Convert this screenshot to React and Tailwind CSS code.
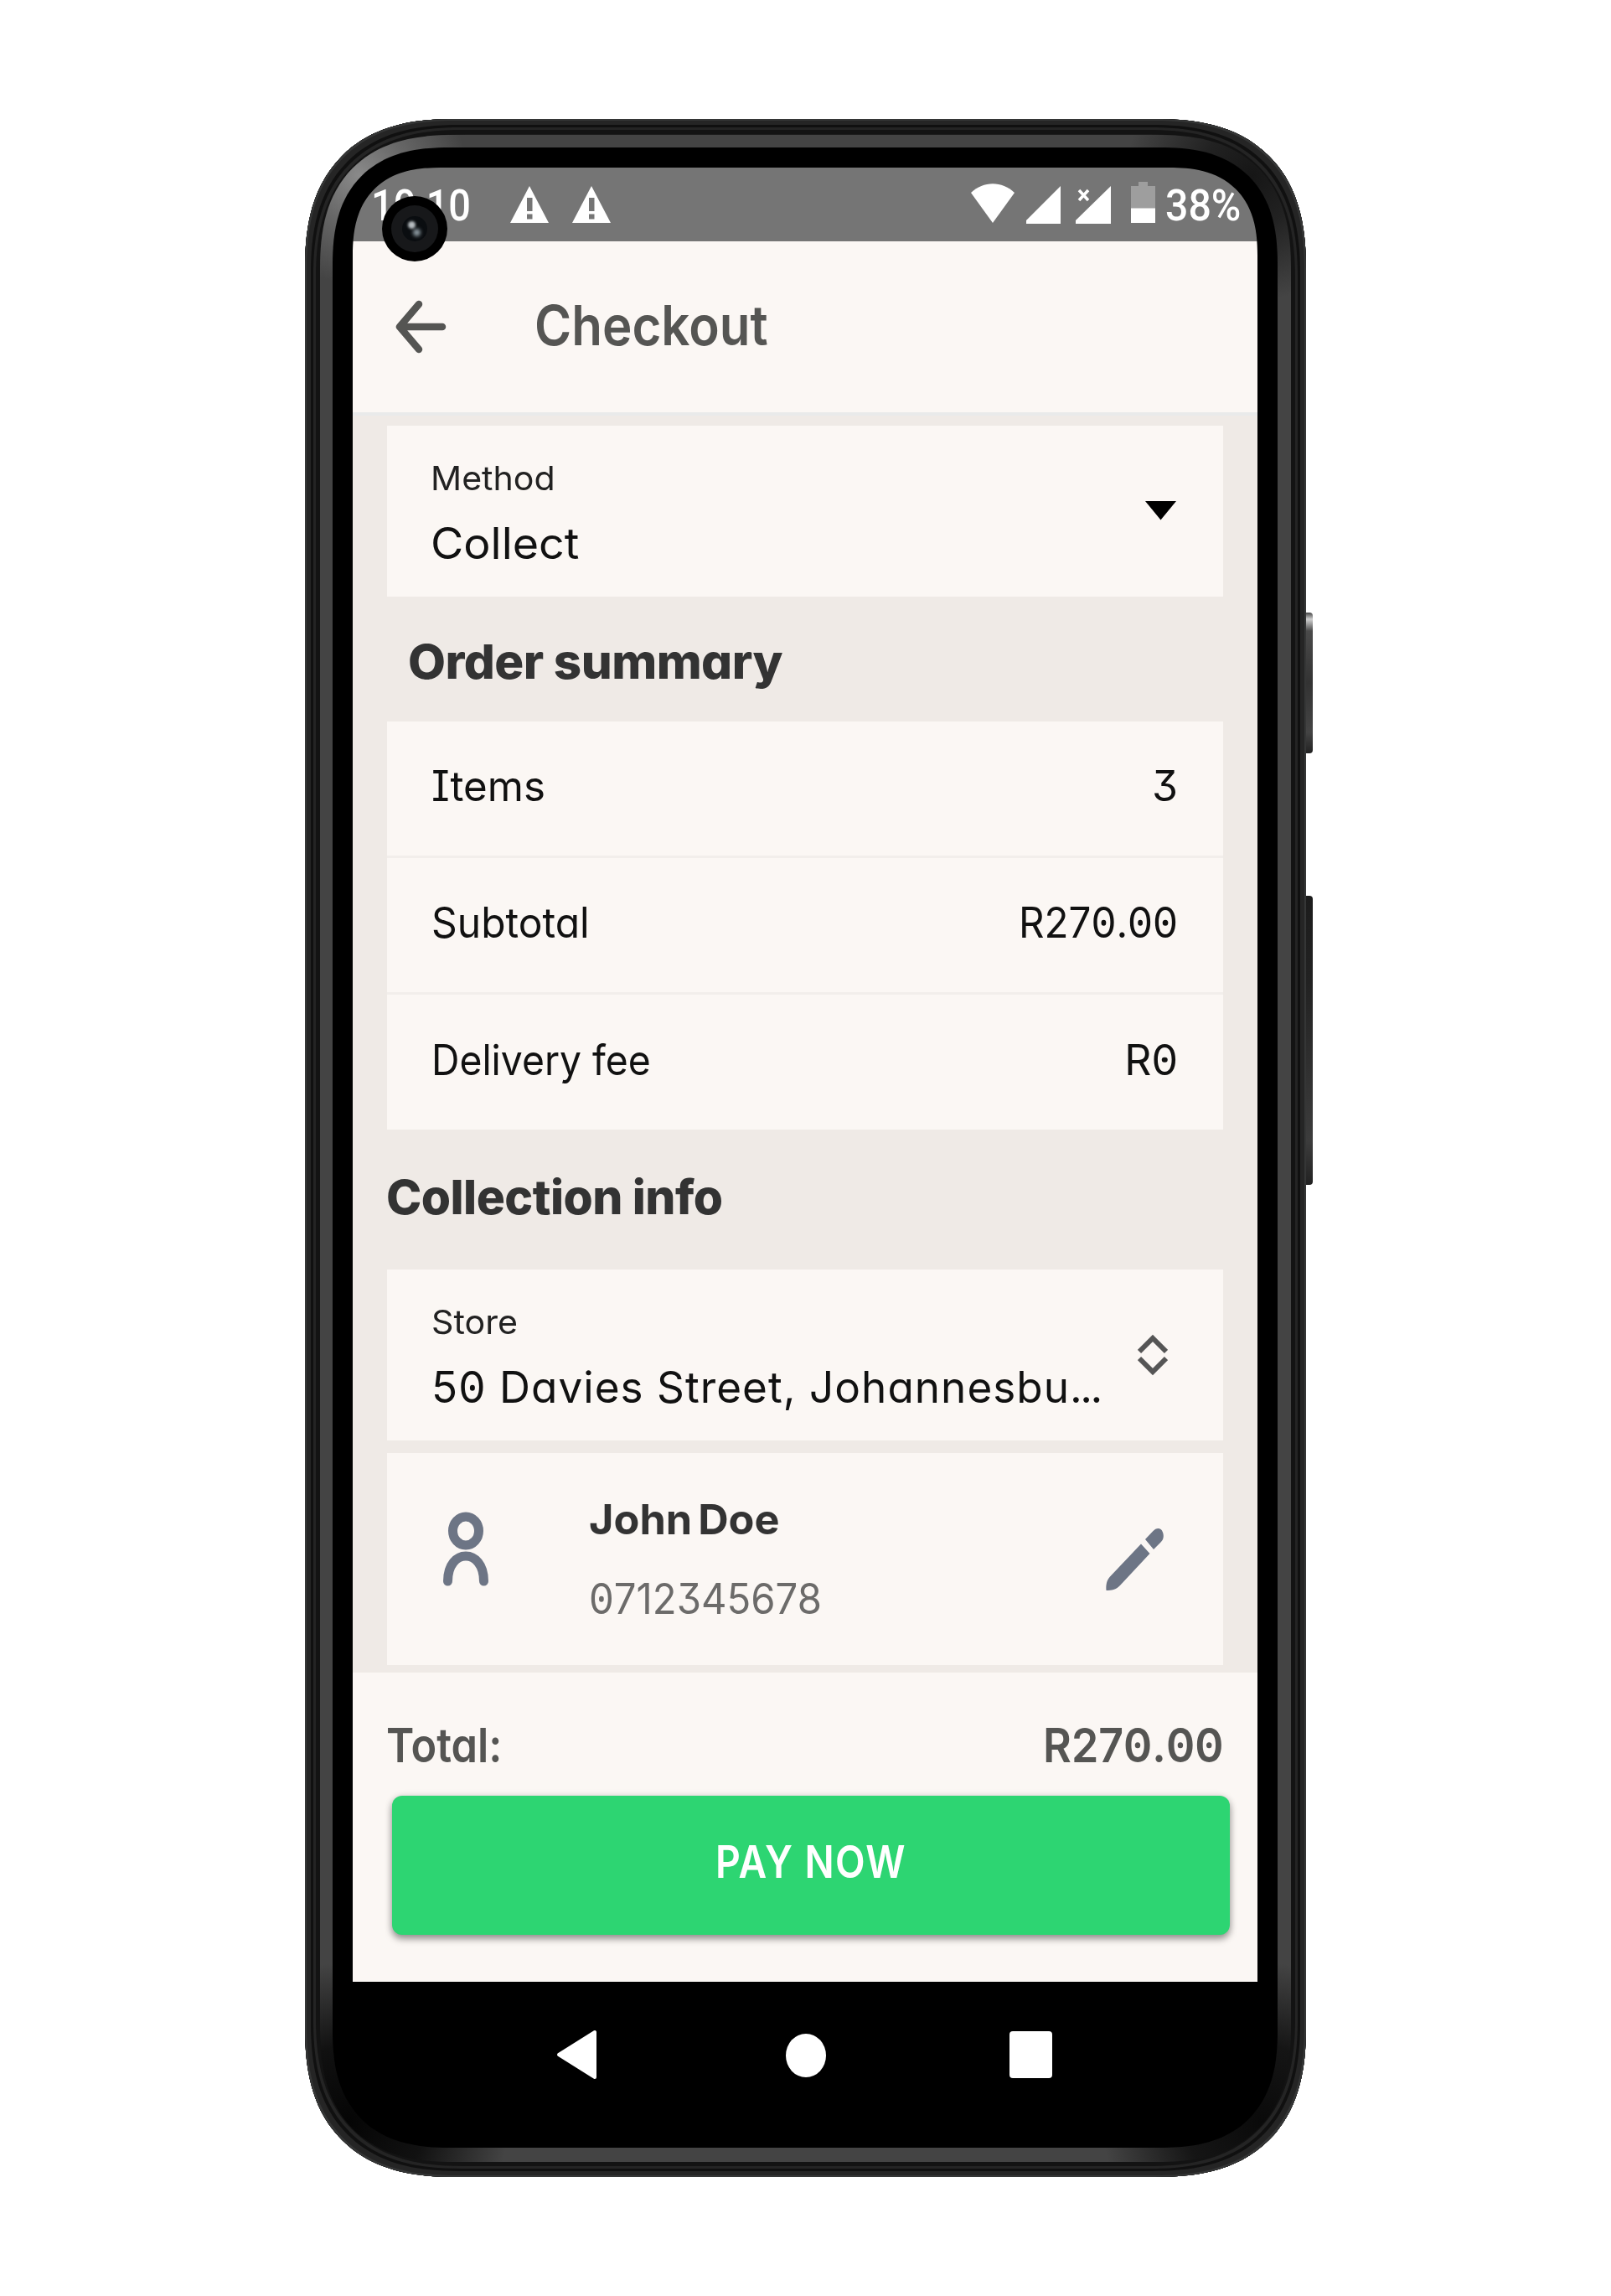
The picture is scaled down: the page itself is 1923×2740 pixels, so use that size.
import React, { useLayoutEffect, useRef, useState } from "react";

/* Text set to a fixed advance width, condensed or widened horizontally. */
function Fit({ w, className = "", right = false, children }) {
  const ref = useRef(null);
  const [k, setK] = useState(1);
  useLayoutEffect(() => {
    if (ref.current) setK(w / ref.current.offsetWidth);
  }, [w]);
  return (
    <div className={"flex whitespace-nowrap " + (right ? "justify-end " : "justify-start ") + className} style={{ width: w }}>
      <span
        ref={ref}
        className={"inline-block shrink-0 whitespace-pre " + (right ? "origin-right" : "origin-left")}
        style={{ transform: `scaleX(${k})` }}
      >
        {children}
      </span>
    </div>
  );
}

/* Figures with a dotted zero. */
function Digits({ text }) {
  return text.split("").map((c, i) =>
    c === "0" ? (
      <span key={i} className="relative inline-block">
        0
        <span className="absolute left-1/2 top-1/2 size-[0.13em] -translate-x-1/2 -translate-y-1/2 rounded-full bg-current" />
      </span>
    ) : (
      c
    )
  );
}

const Warning = () => (
  <svg width="46" height="44" viewBox="0 0 46 44" fill="#fff">
    <path fillRule="evenodd" d="M23 0L46 44H0ZM20 14V30H26.500V14ZM20 33.500V39.500H26.500V33.500Z" />
  </svg>
);

function StatusBar() {
  return (
    <div className="relative flex h-[88px] items-start bg-[#757575] font-[Roboto,sans-serif] text-[52px] font-medium leading-[92px] text-white">
      <Fit w={119} className="ml-[22px]">10:10</Fit>
      <div className="ml-[47px] mt-[22px] flex gap-[28px]">
        <Warning />
        <Warning />
      </div>
      <svg className="ml-[430px] mt-[19px]" width="52" height="47" viewBox="0 0 52 47" fill="#fff">
        <path d="M0 11C15-3.500 37-3.500 52 11L26 47Z" />
      </svg>
      <svg className="ml-[14px] mt-[22px]" width="41" height="45" viewBox="0 0 41 45" fill="#fff">
        <path d="M41 0V45H0V41Z" />
      </svg>
      <svg className="ml-[18px] mt-[22px]" width="42" height="45" viewBox="0 0 42 45" fill="#fff">
        <path d="M42 0V45H0V41Z" />
        <path d="M4 5L15 17M15 5L4 17" stroke="#fff" strokeWidth="3.500" />
      </svg>
      <svg className="ml-[24px] mt-[17px]" width="29" height="49" viewBox="0 0 29 49">
        <path d="M9 0H20V5H29V32H0V5H9Z" fill="#9e9e9e" />
        <path d="M0 31.500H29V49H0Z" fill="#fff" />
      </svg>
      <Fit w={90} className="ml-[12px]">38%</Fit>
    </div>
  );
}

function Row({ label, value, lw, vw, last }) {
  return (
    <div className={"flex items-center justify-between pr-[54px] pb-[6px] pl-[53px] text-[50px] leading-[60px] text-[#111] " + (last ? "h-[161px]" : "h-[163px] border-b-3 border-[#f2eeeb]")}>
      <Fit w={lw}>{label}</Fit>
      <Fit w={vw} right>
        <Digits text={value} />
      </Fit>
    </div>
  );
}

function Screen() {
  return (
    <div className="flex h-[2341px] w-[1080px] flex-col overflow-hidden rounded-[88px] bg-black font-[Inter,sans-serif] [font-feature-settings:'cv11','cv08','cv09'] supports-[corner-shape:round]:rounded-[105px] supports-[corner-shape:round]:[corner-shape:superellipse(1.3)]">
      <StatusBar />

      <header className="flex h-[208px] items-center border-b-4 border-[#e9eaea] bg-[#fbf7f4] pl-[50px]">
        <svg width="62" height="64" viewBox="0 0 62 64" fill="none" stroke="#555553" strokeWidth="8.500" strokeLinecap="round" strokeLinejoin="round">
          <path d="M57 32H6M29 5L6 32L29 59" />
        </svg>
        <Fit w={279} className="mb-[5px] ml-[105px] text-[66px] font-semibold leading-[80px] text-[#555553]">Checkout</Fit>
      </header>

      <main className="h-[1500px] bg-[#efeae6] px-[41px] pt-[12px] text-[#111]">
        <section className="flex h-[204px] justify-between bg-[#fbf7f4] pl-[52px] pr-[56px]">
          <div>
            <Fit w={149} className="mt-[43px] text-[40px] leading-[40px] text-[#222]">Method</Fit>
            <Fit w={177} className="mt-[28px] text-[52px] leading-[60px]">Collect</Fit>
          </div>
          <svg className="mt-[89px]" width="37" height="24" viewBox="0 0 37 24">
            <path d="M0 1H37L18.500 23.500Z" fill="#000" />
          </svg>
        </section>

        <Fit w={447} className="mt-[42px] ml-[25px] text-[57px] font-extrabold leading-[72px] tracking-[-0.01em] text-[#333]">Order summary</Fit>

        <section className="mt-[35px] bg-[#fbf7f4]">
          <Row label="Items" value="3" lw={136} vw={31} />
          <Row label="Subtotal" value="R270.00" lw={189} vw={190} />
          <Row label="Delivery fee" value="R0" lw={262} vw={64} last />
        </section>

        <Fit w={401} className="mt-[45px] -ml-px text-[57px] font-extrabold leading-[72px] tracking-[-0.01em] text-[#333]">Collection info</Fit>

        <section className="mt-[50px] flex h-[204px] justify-between bg-[#fbf7f4] pl-[53px] pr-[66px]">
          <div>
            <Fit w={103} className="mt-[43px] text-[40px] leading-[40px] text-[#222]">Store</Fit>
            <Fit w={799} className="mt-[28px] text-[52px] leading-[60px] tracking-[0.02em]">
              <Digits text="50 Davies Street, Johannesbu" />
              <span className="tracking-[-0.05em]">...</span>
            </Fit>
          </div>
          <svg className="mt-[77px]" width="36" height="50" viewBox="0 0 36 50" fill="none" stroke="#555" strokeWidth="6">
            <path d="M2 21L18 5L34 21M2 29L18 45L34 29" />
          </svg>
        </section>

        <section className="mt-[15px] flex h-[253px] bg-[#fbf7f4]">
          <svg className="ml-[67px] mt-[70px]" width="54" height="90" viewBox="0 0 54 90" fill="none" stroke="#6d7585" strokeWidth="11" strokeLinecap="round">
            <ellipse cx="27" cy="23" rx="15.500" ry="17" />
            <path d="M5.500 83C5.500 43 48.500 43 48.500 83" />
          </svg>
          <div className="ml-[120px]">
            <Fit w={228} className="mt-[49px] text-[50px] font-bold leading-[60px] [word-spacing:-0.1em] text-[#333]">John Doe</Fit>
            <Fit w={278} className="mt-[35px] text-[50px] leading-[60px] text-[#6c6b6a]">
              <Digits text="0712345678" />
            </Fit>
          </div>
          <svg className="ml-auto mr-[71px] mt-[89px]" width="69" height="75" viewBox="0 0 69 75" fill="#6d7585">
            <path d="M42 19.500L52.500 31L17 69C12 74.500 7 75 0.500 75C0 68 1 63 5 58.500Z" />
            <path d="M47 14L56 4.500C60 0 65 0 67 3.500C70 9 69 14 66 17L57 26Z" />
          </svg>
        </section>
      </main>

      <footer className="h-[369px] bg-[#fbf7f4] px-[41px] pt-[51px]">
        <div className="flex justify-between text-[56px] font-semibold leading-[72px] text-[#555553]">
          <Fit w={138} className="-ml-px">Total:</Fit>
          <Fit w={215} right>
            <Digits text="R270.00" />
          </Fit>
        </div>
        <button className="mt-[24px] ml-[6px] flex h-[166px] w-[1000px] items-center justify-center rounded-[12px] bg-[#2dd572] pb-[9px] text-[53px] font-semibold leading-[60px] text-white shadow-[0_5px_8px_rgba(0,0,0,0.36),0_1px_10px_rgba(0,0,0,0.14)]">
          <Fit w={228} className="tracking-[0.03em]">PAY NOW</Fit>
        </button>
      </footer>

      <nav className="flex h-[176px] items-start bg-black">
        <svg className="ml-[243px] mt-[57px]" width="49" height="60" viewBox="0 0 49 60" fill="#fff" stroke="#fff" strokeWidth="4" strokeLinejoin="round">
          <path d="M46 3V57L3 30Z" />
        </svg>
        <div className="ml-[225px] mt-[62px] h-[52px] w-[48px] rounded-[50%] bg-white" />
        <div className="ml-[219px] mt-[59px] h-[56px] w-[51px] rounded-[4px] bg-white" />
      </nav>
    </div>
  );
}

export default function App() {
  return (
    <div className="flex h-[2740px] w-[1923px] items-start bg-white pt-[142px] pl-[364px]">
      <div className="relative h-[2456px] w-[1195px]">
        <div className="h-[2456px] w-[1195px] rounded-[152px] bg-[#1d1d1d] pt-[19px] pl-[18px] shadow-[inset_0_0_0_2px_#353636,inset_0_0_0_7px_#252525,inset_0_0_0_10px_#101010,inset_0_0_0_13px_#242424,inset_0_0_0_18px_#131313] supports-[corner-shape:round]:rounded-[180px] supports-[corner-shape:round]:[corner-shape:superellipse(1.3)]">
          <div className="h-[2419px] w-[1159px] rounded-[130px] bg-[#444] bg-[radial-gradient(circle_at_4%_2%,#8a8a8a_0,#666_60px,transparent_130px),radial-gradient(circle_at_96%_2%,#161616_0,#222_60px,transparent_150px),radial-gradient(circle_at_3%_98%,#050505_0,#111_90px,transparent_190px),radial-gradient(circle_at_97%_98%,#0a0a0a_0,#151515_90px,transparent_190px)] pt-[15px] pl-[15px] supports-[corner-shape:round]:rounded-[160px] supports-[corner-shape:round]:[corner-shape:superellipse(1.3)]">
            <div className="h-[2387px] w-[1128px] rounded-[114px] bg-black pt-[24px] pl-[24px] supports-[corner-shape:round]:rounded-[140px] supports-[corner-shape:round]:[corner-shape:superellipse(1.3)]">
              <Screen />
            </div>
          </div>
        </div>

        {/* front camera */}
        <div className="absolute left-[92px] top-[92px] flex size-[78px] items-center justify-center rounded-full bg-black">
          <div className="flex size-[56px] items-center justify-center rounded-full bg-[#17181a]">
            <div className="relative size-[30px] rounded-full bg-[#0a0d10]">
              <div className="absolute left-[7px] top-[6px] size-[9px] rounded-full bg-[#b8bec2] blur-[1.5px]" />
              <div className="absolute left-[13px] top-[15px] size-[9px] rounded-full bg-[#8b989f] blur-[2px]" />
            </div>
          </div>
        </div>

        {/* side keys */}
        <div className="absolute left-[1195px] top-[589px] h-[168px] w-[8px] rounded-r-[4px] bg-[linear-gradient(to_bottom,#444,#d0d0d0_8px,#4a4a4a_22px,#333_50%,#444_85%,#222)]" />
        <div className="absolute left-[1195px] top-[927px] h-[345px] w-[8px] rounded-r-[4px] bg-[linear-gradient(to_bottom,#1c1c1c,#222_30%,#3c3c3c_85%,#222)]" />
      </div>
    </div>
  );
}
